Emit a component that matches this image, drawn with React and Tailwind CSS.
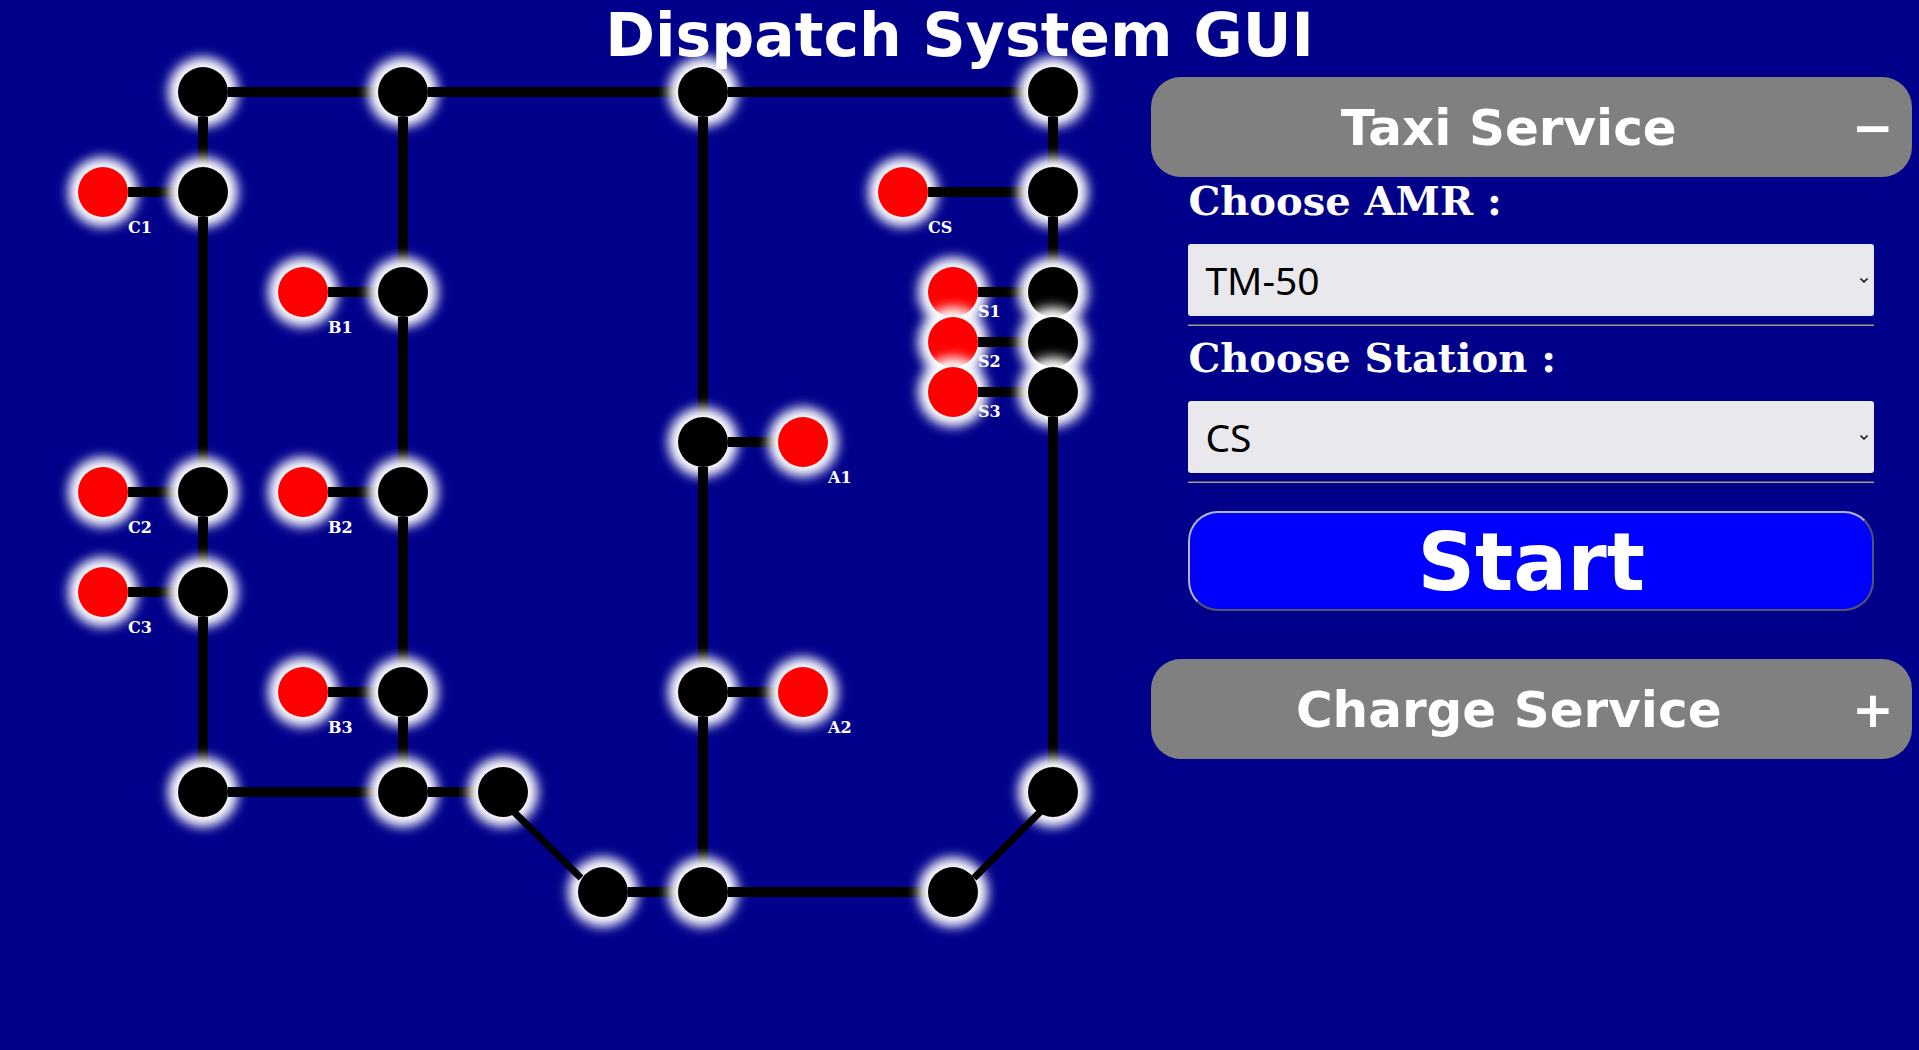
import React, { useState } from "react";

// Points of the track, in drawing order. "right" and "down" are the lengths of
// the tracks that leave the point, measured centre to centre.
const points = [
  { x: 203, y: 22, right: 200, down: 100 },
  { x: 403, y: 22, right: 300, down: 200 },
  { x: 703, y: 22, right: 350, down: 350 },
  { x: 1053, y: 22, down: 100 },
  { x: 103, y: 122, right: 100, name: "C1" },
  { x: 203, y: 122, down: 300 },
  { x: 903, y: 122, right: 150, name: "CS" },
  { x: 1053, y: 122, down: 100 },
  { x: 303, y: 222, right: 100, name: "B1" },
  { x: 403, y: 222, down: 200 },
  { x: 953, y: 222, right: 100, name: "S1", close: true },
  { x: 1053, y: 222, down: 50 },
  { x: 953, y: 272, right: 100, name: "S2", close: true },
  { x: 1053, y: 272, down: 50 },
  { x: 953, y: 322, right: 100, name: "S3", close: true },
  { x: 1053, y: 322, down: 400 },
  { x: 703, y: 372, right: 100, down: 250 },
  { x: 803, y: 372, name: "A1" },
  { x: 103, y: 422, right: 100, name: "C2" },
  { x: 203, y: 422, down: 100 },
  { x: 303, y: 422, right: 100, name: "B2" },
  { x: 403, y: 422, down: 200 },
  { x: 103, y: 522, right: 100, name: "C3" },
  { x: 203, y: 522, down: 200 },
  { x: 303, y: 622, right: 100, name: "B3" },
  { x: 403, y: 622, down: 100 },
  { x: 703, y: 622, right: 100, down: 200 },
  { x: 803, y: 622, name: "A2" },
  { x: 203, y: 722, right: 200 },
  { x: 403, y: 722, right: 100 },
  { x: 503, y: 722 },
  { x: 1053, y: 722 },
  { x: 603, y: 822, right: 100 },
  { x: 703, y: 822, right: 250 },
  { x: 953, y: 822 },
];

function Point({ point }) {
  const { x, y, right, down, name } = point;
  return (
    <>
      <div
        className={`absolute size-[50px] rounded-full shadow-[0_0_12px_10px_white] ${name ? "bg-[red]" : "bg-black"}`}
        style={{ left: x - 25, top: y - 25 }}
      />
      {right && (
        <div className="absolute h-[10px] bg-black" style={{ left: x + 25, top: y - 5, width: right - 25 }} />
      )}
      {down && (
        <div className="absolute w-[10px] bg-black" style={{ left: x - 5, top: y + 25, height: down - 25 }} />
      )}
    </>
  );
}

function TrackMap() {
  return (
    <section aria-label="Track map" className="relative min-h-[900px] w-3/5 shrink-0">
      {points.map((p) => (
        <Point key={`${p.x}-${p.y}`} point={p} />
      ))}
      <svg className="absolute top-0 left-0 h-[900px] w-[1151px]" stroke="black" strokeWidth="7" aria-hidden="true">
        <path d="M514 742 L581 808 M1041 741 L974 808" />
      </svg>
      {points
        .filter((p) => p.name)
        .map((p) => (
          <span
            key={p.name}
            className="absolute font-['DejaVu_Serif',serif] text-base leading-5 font-bold text-white"
            style={{ left: p.x + 25, top: p.y + (p.close ? 10 : 26) }}
          >
            {p.name}
          </span>
        ))}
    </section>
  );
}

function ServiceHeader({ title, open, onToggle }) {
  return (
    <button
      type="button"
      aria-expanded={open}
      onClick={onToggle}
      className="flex h-[100px] w-full items-center gap-1 rounded-[30px] bg-[gray] px-[18px] pt-[2px] text-[50px] font-bold text-white"
    >
      <span className="flex-1 text-center">{title}</span>
      <span>{open ? "−" : "+"}</span>
    </button>
  );
}

function Choice({ id, label, options }) {
  return (
    <div className="mb-2">
      <label htmlFor={id} className="block font-['DejaVu_Serif',serif] text-[40px] leading-[47px] font-bold text-white">
        {label}
      </label>
      <div className="relative mt-5">
        <select
          id={id}
          className="block h-[72px] w-full appearance-none rounded-[3px] bg-[#e9e9ed] px-[17px] font-['Noto_Sans',sans-serif] text-[39px] leading-[52px] text-black"
        >
          {options.map((o) => (
            <option key={o}>{o}</option>
          ))}
        </select>
        <svg
          viewBox="0 0 8 5"
          className="pointer-events-none absolute top-[34px] right-[6px] h-[5px] w-[8px]"
          fill="none"
          stroke="black"
          strokeWidth="1.4"
          aria-hidden="true"
        >
          <path d="M0.5 0.5 L4 4 L7.5 0.5" />
        </svg>
      </div>
      <hr className="mt-2 h-[2px] border-t border-b border-t-[#55555f] border-b-[#9a9a9a]" />
    </div>
  );
}

export default function App() {
  const [open, setOpen] = useState("taxi");
  const toggle = (name) => setOpen(open === name ? "" : name);

  return (
    <div className="min-h-screen overflow-hidden bg-[#00008b] font-['DejaVu_Sans',sans-serif]">
      <h1 className="text-center text-[60px] leading-[70px] font-bold text-white">Dispatch System GUI</h1>
      <main className="flex">
        <TrackMap />
        <aside className="w-2/5 pt-[7px] pr-[7px]">
          <ServiceHeader title="Taxi Service" open={open === "taxi"} onToggle={() => toggle("taxi")} />
          {open === "taxi" && (
            <form className="pr-[38px] pb-12 pl-[37px]" onSubmit={(e) => e.preventDefault()}>
              <Choice id="amr" label="Choose AMR :" options={["TM-50"]} />
              <Choice
                id="station"
                label="Choose Station :"
                options={["CS", "A1", "A2", "B1", "B2", "B3", "C1", "C2", "C3", "S1", "S2", "S3"]}
              />
              <button
                type="submit"
                className="mt-7 block h-[100px] w-full rounded-[30px] border-2 border-t-[#b4b4c8] border-r-[#55556a] border-b-[#55556a] border-l-[#b4b4c8] bg-[blue] pt-1 text-[80px] leading-[92px] font-bold text-white"
              >
                Start
              </button>
            </form>
          )}
          <ServiceHeader title="Charge Service" open={open === "charge"} onToggle={() => toggle("charge")} />
        </aside>
      </main>
    </div>
  );
}
